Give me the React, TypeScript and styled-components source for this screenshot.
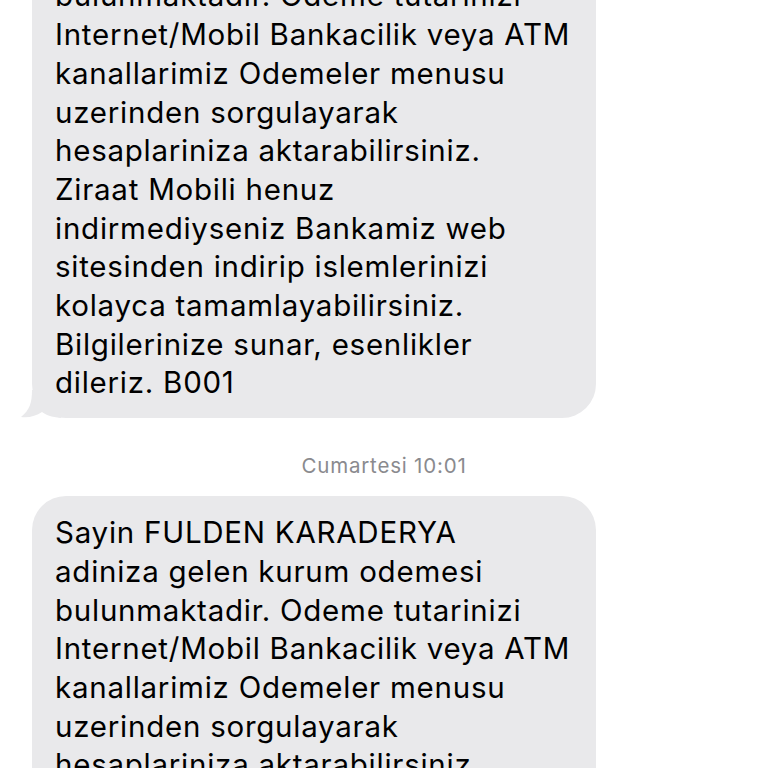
import React from "react";
import styled, { createGlobalStyle } from "styled-components";

const GlobalStyle = createGlobalStyle`
    html, body {
        margin: 0;
        padding: 0;
        background: #ffffff;
        overflow: hidden;
    }
    body {
        font-family: Inter, "Noto Sans", "Liberation Sans", sans-serif;
        -webkit-font-smoothing: antialiased;
    }
`;

const Thread = styled.div<{ $offset: number }>`
    display: flex;
    flex-direction: column;
    width: 768px;
    margin-top: ${(p) => -p.$offset}px;
`;

const Row = styled.div`
    display: flex;
    padding-left: 32px;
`;

const Bubble = styled.div`
    position: relative;
    width: 564px;
    box-sizing: border-box;
    padding: 17px 0 16px 23px;
    background: #e9e9eb;
    border-radius: 34px;
    color: #000000;
    font-size: 29.5px;
    line-height: 38.7px;
    letter-spacing: 0.75px;
`;

const Line = styled.div`
    position: relative;
    white-space: nowrap;
`;

const Tail = styled.svg`
    position: absolute;
    left: -11px;
    bottom: 0;
    width: 40px;
    height: 28px;
`;

const Stamp = styled.div`
    display: flex;
    justify-content: center;
    margin: 37px 0 19px;
    font-size: 20.5px;
    line-height: 22px;
    color: #8a8a8e;
    letter-spacing: 0.8px;
`;

const message = [
    "Sayin FULDEN KARADERYA",
    "adiniza gelen kurum odemesi",
    "bulunmaktadir. Odeme tutarinizi",
    "Internet/Mobil Bankacilik veya ATM",
    "kanallarimiz Odemeler menusu",
    "uzerinden sorgulayarak",
    "hesaplariniza aktarabilirsiniz.",
    "Ziraat Mobili henuz",
    "indirmediyseniz Bankamiz web",
    "sitesinden indirip islemlerinizi",
    "kolayca tamamlayabilirsiniz.",
    "Bilgilerinize sunar, esenlikler",
    "dileriz. B001",
];

const Message = ({ lines, tail }: { lines: string[]; tail?: boolean }) => (
    <Row>
        <Bubble>
            {tail && (
                <Tail viewBox="0 0 40 28">
                    <path
                        d="M11 0 C11 12 9 20 0 27 C8 28 15 26 21 22 C25 25 30 27 40 28 L40 0 Z"
                        fill="#e9e9eb"
                    />
                </Tail>
            )}
            {lines.map((l, i) => (
                <Line key={i}>{l}</Line>
            ))}
        </Bubble>
    </Row>
);

export default function App() {
    return (
        <>
            <GlobalStyle />
            <Thread $offset={118}>
                <Message lines={message} tail />
                <Stamp>Cumartesi 10:01</Stamp>
                <Message lines={message} />
            </Thread>
        </>
    );
}
